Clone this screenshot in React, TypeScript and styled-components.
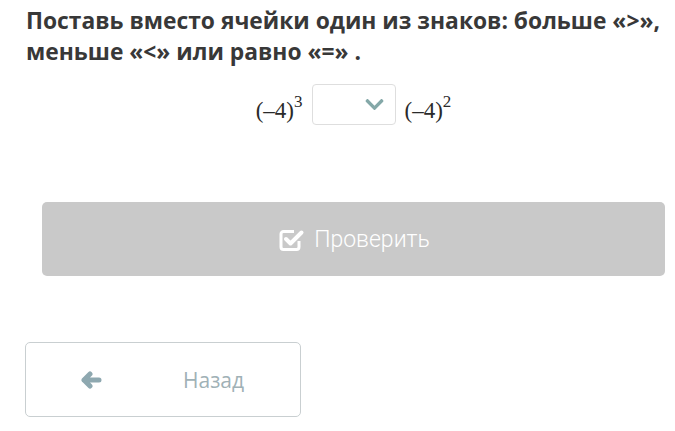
import React, { useState } from 'react';
import styled, { createGlobalStyle } from 'styled-components';
import { FaChevronDown } from 'react-icons/fa';

const GlobalStyle = createGlobalStyle`
  html, body {
    margin: 0;
    padding: 0;
    background: #ffffff;
    overflow: hidden;
  }
  body {
    font-family: 'Open Sans', 'Liberation Sans', sans-serif;
  }
`;

// check-square-o, the tick breaks out of the box top-right
const CheckSquareIcon = () => (
  <svg width='27' height='25' viewBox='0 0 27 25' fill='none'>
    <path
      d='M20 14 V20 a2.5 2.5 0 0 1 -2.5 2.5 H4.5 a2.5 2.5 0 0 1 -2.5 -2.5 V7 a2.5 2.5 0 0 1 2.5 -2.5 H15'
      stroke='currentColor'
      strokeWidth='3'
      strokeLinejoin='round'
    />
    <path
      d='M7 12 L11.5 16.5 L22.5 5.5'
      stroke='currentColor'
      strokeWidth='4'
      strokeLinecap='round'
      strokeLinejoin='round'
    />
  </svg>
);

const ArrowLeftIcon = () => (
  <svg width='22' height='18' viewBox='0 0 22 18' fill='none'>
    <path
      d='M10 3 L4 9 L10 15 M4 9 H19'
      stroke='currentColor'
      strokeWidth='5'
      strokeLinecap='round'
      strokeLinejoin='round'
    />
  </svg>
);

const App = () => {
  const [sign, setSign] = useState<string>('');

  return (
    <>
      <GlobalStyle />
      <Page>
        <Question>
          Поставь вместо ячейки один из знаков: больше «&gt;», меньше «&lt;» или равно «=» .
        </Question>

        <MathRow>
          <Expr>
            (–4)<Sup>3</Sup>
          </Expr>
          <SelectBox onClick={() => setSign(prev => prev)}>
            <SelectValue>{sign}</SelectValue>
            <Chevron />
          </SelectBox>
          <Expr>
            (–4)<Sup>2</Sup>
          </Expr>
        </MathRow>

        <CheckButton disabled>
          <CheckSquareIcon />
          <span>Проверить</span>
        </CheckButton>

        <BackButton>
          <BackIcon>
            <ArrowLeftIcon />
          </BackIcon>
          <BackLabel>Назад</BackLabel>
        </BackButton>
      </Page>
    </>
  );
};

const Page = styled.div`
  width: 655px;
  margin-left: 26px;
  padding-top: 5px;
  display: flex;
  flex-direction: column;
`;

const Question = styled.h1`
  margin: 0;
  font-family: 'Open Sans', 'Liberation Sans', sans-serif;
  font-weight: 700;
  font-size: 22.8px;
  line-height: 31px;
  color: #383838;
  width: 650px;
`;

const MathRow = styled.div`
  display: flex;
  align-items: center;
  justify-content: center;
  gap: 9px;
  margin-top: 17px;
`;

const Expr = styled.span`
  font-family: 'Liberation Serif', 'DejaVu Serif', serif;
  font-size: 23px;
  color: #2a2a2a;
  padding-top: 12px;
`;

const Sup = styled.sup`
  font-size: 17px;
  vertical-align: 11px;
  line-height: 0;
`;

const SelectBox = styled.div`
  position: relative;
  width: 84px;
  height: 41px;
  box-sizing: border-box;
  border: 1px solid #dedede;
  border-radius: 4px;
  background: #ffffff;
  display: flex;
  align-items: center;
  justify-content: flex-end;
  padding-right: 10px;
  cursor: pointer;
`;

const SelectValue = styled.span`
  flex: 1;
`;

const Chevron = styled(FaChevronDown)`
  font-size: 21px;
  color: #84a8a8;
`;

const CheckButton = styled.button`
  margin: 77px 16px 0;
  height: 74px;
  border: none;
  border-radius: 5px;
  background: #c9c9c9;
  color: #ffffff;
  display: flex;
  align-items: center;
  justify-content: center;
  gap: 8px;
  font-family: 'Roboto', 'Open Sans', sans-serif;
  font-weight: 300;
  font-size: 23px;
  padding: 0 0 0 2px;
`;

const BackButton = styled.button`
  margin-top: 66px;
  margin-left: -1px;
  width: 276px;
  height: 75px;
  box-sizing: border-box;
  border: 1px solid #c9cfd1;
  border-radius: 5px;
  background: #ffffff;
  display: flex;
  align-items: center;
  padding: 0 0 0 54px;
  cursor: pointer;
`;

const BackIcon = styled.span`
  display: flex;
  color: #8ea8b0;
`;

const BackLabel = styled.span`
  margin-left: 81px;
  font-family: 'Open Sans', 'Liberation Sans', sans-serif;
  font-weight: 400;
  font-size: 21px;
  color: #9fb1b6;
`;

export default App;
